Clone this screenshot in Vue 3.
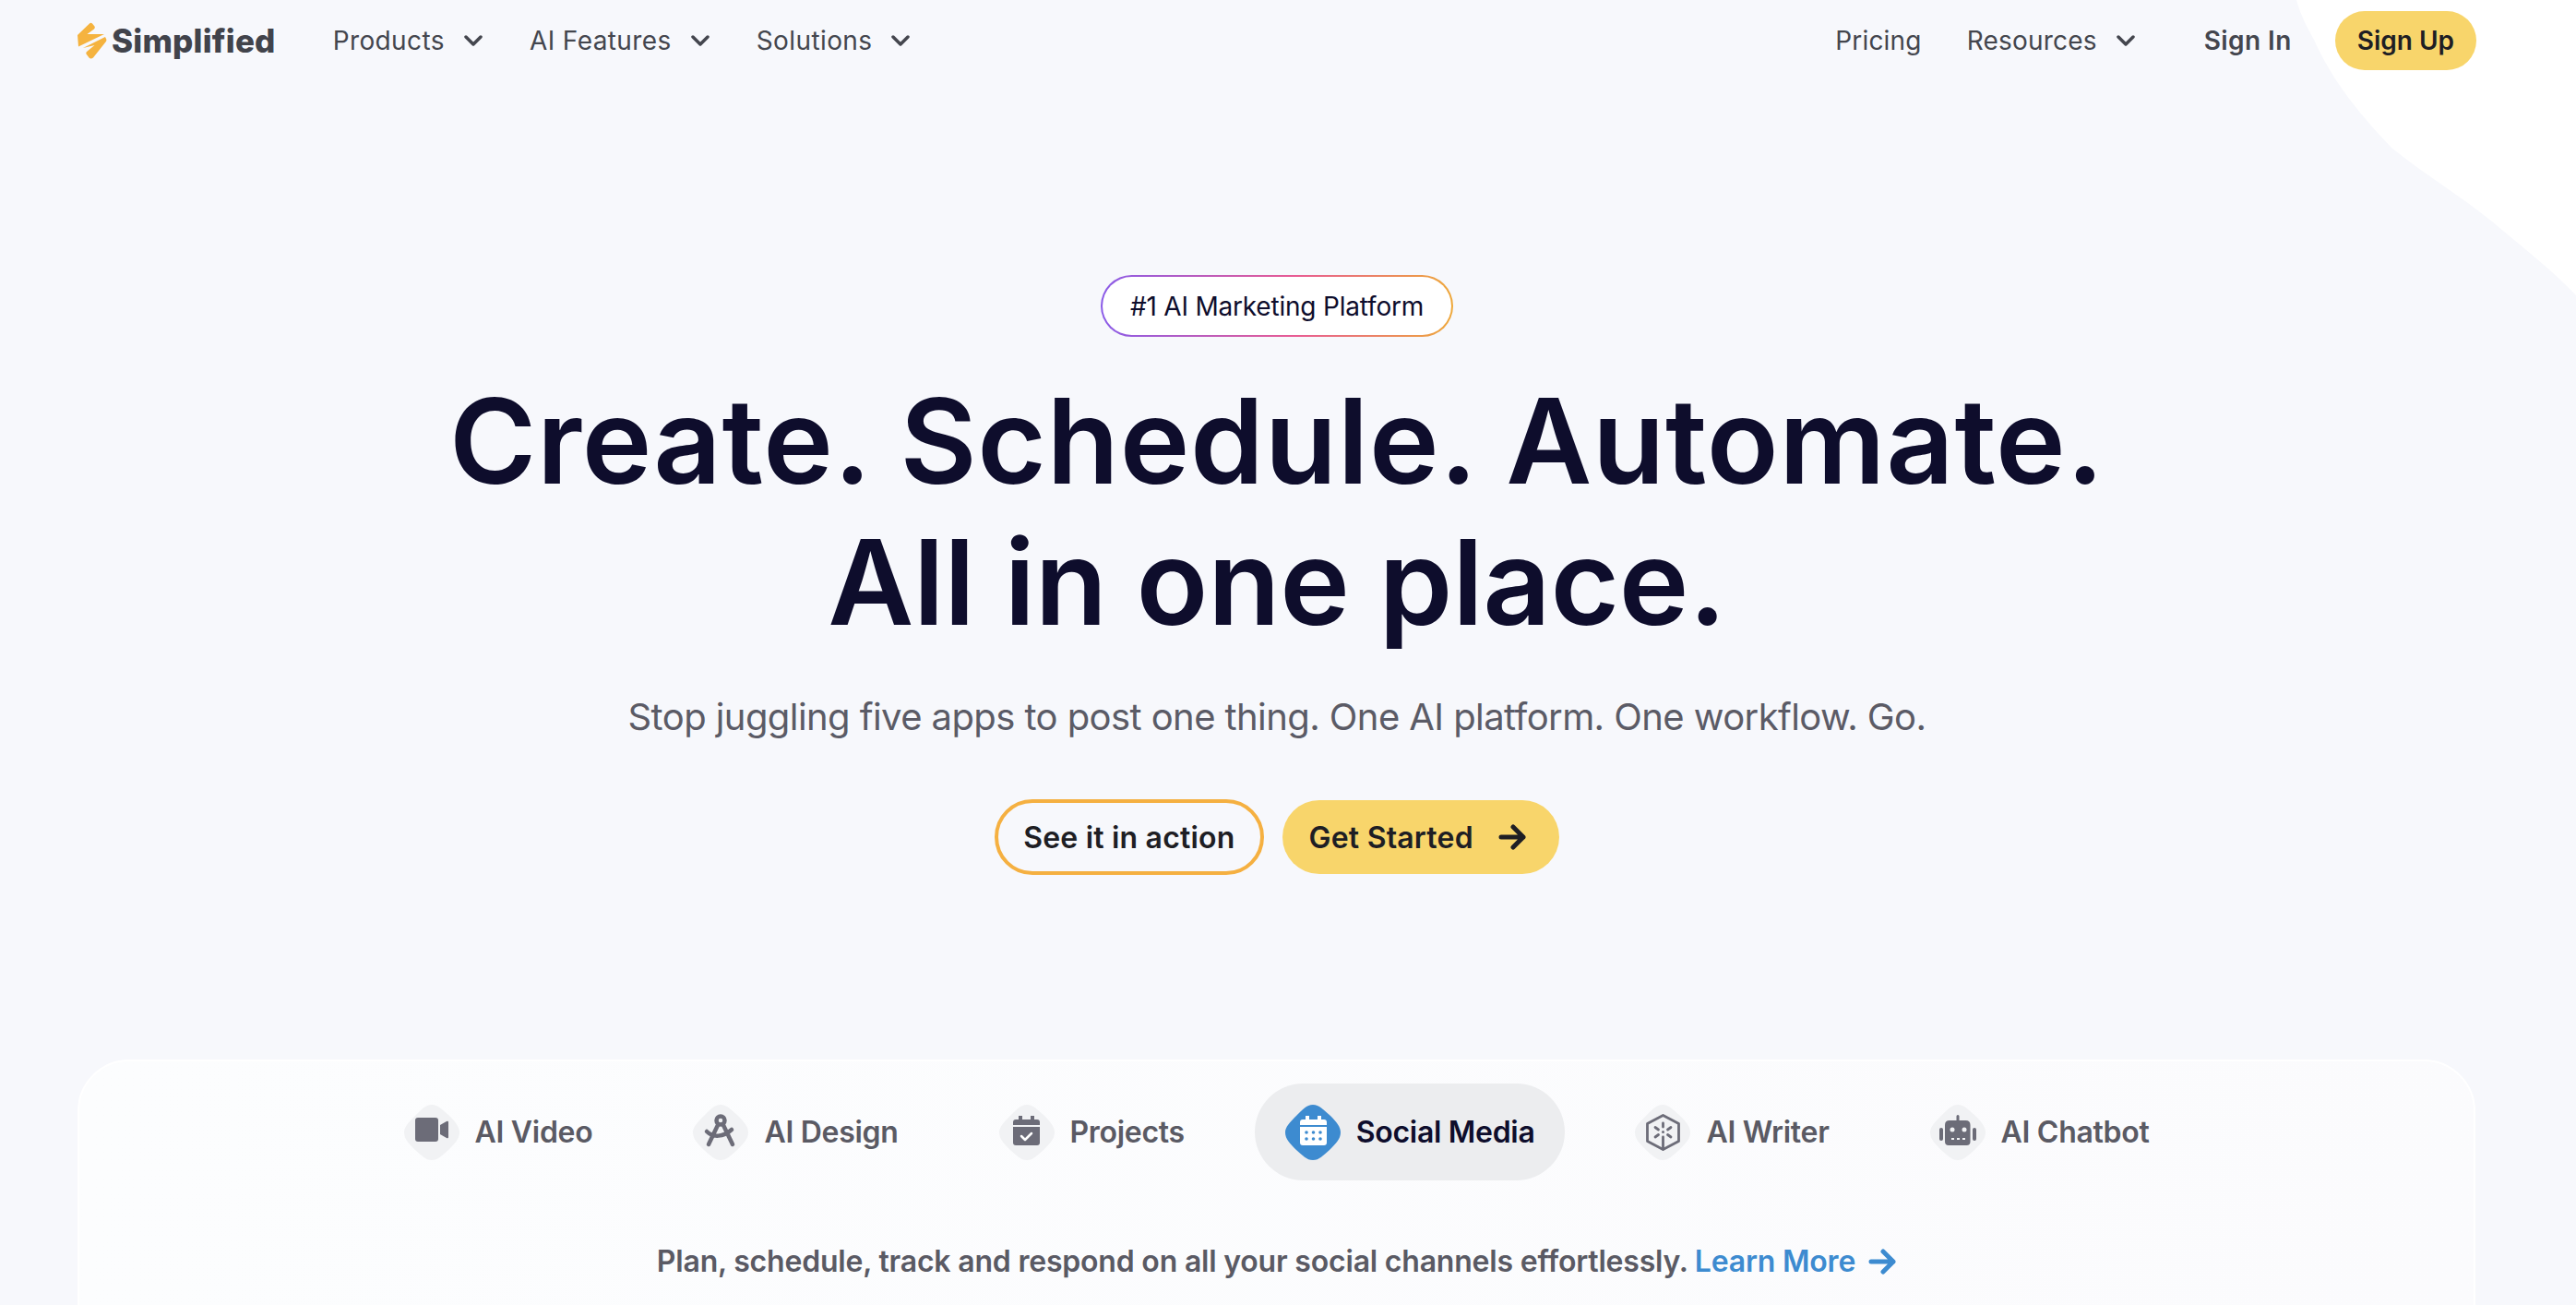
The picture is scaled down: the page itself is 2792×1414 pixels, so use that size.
<script setup>
const leftLinks = [
  { label: 'Products', drop: true },
  { label: 'AI Features', drop: true },
  { label: 'Solutions', drop: true }
]
const rightLinks = [
  { label: 'Pricing', drop: false },
  { label: 'Resources', drop: true }
]
const tabs = [
  { id: 'video', label: 'AI Video' },
  { id: 'design', label: 'AI Design' },
  { id: 'projects', label: 'Projects' },
  { id: 'social', label: 'Social Media', active: true },
  { id: 'writer', label: 'AI Writer' },
  { id: 'chatbot', label: 'AI Chatbot' }
]
const blob = 'M30 0C37 0 41 5 49 12C56 19 60 24 60 30C60 37 55 42 48 49C41 55 37 60 30 60C23 60 19 55 12 49C5 42 0 37 0 30C0 24 5 19 12 12C19 5 23 0 30 0Z'
</script>

<template>
  <div class="page">
    <svg class="corner" viewBox="0 0 303 320" width="303" height="320">
      <path d="M0 0C5 18 12 30 19 43C40 90 70 125 103 160C140 190 175 210 212 240C245 268 280 295 303 320V0Z" fill="#fff" />
    </svg>

    <header class="nav">
      <div class="nav-left">
        <a class="logo">
          <svg viewBox="0 0 32 40" width="32" height="40">
            <path d="M0 14L13 1.500Q14.500 0 16 1.500L18.500 4.500Q19.500 6 18 7.500L10.500 13H29L1 26.500Z" fill="#f5b33f" />
            <path d="M30 16L31 18Q32 20 30.500 21.500L17 38.500Q14.500 40.500 12.500 38.500L9.500 34.500Q9 33 10 32L18.500 25L6 28Z" fill="#f5b33f" />
          </svg>
          <span>Simplified</span>
        </a>
        <a v-for="link in leftLinks" :key="link.label" class="nav-link">
          {{ link.label }}
          <svg class="chev" viewBox="0 0 20 12" width="20" height="12">
            <path d="M2 2l8 8 8-8" fill="none" stroke="#44464e" stroke-width="3.500" stroke-linecap="round" stroke-linejoin="round" />
          </svg>
        </a>
      </div>
      <div class="nav-right">
        <a v-for="link in rightLinks" :key="link.label" class="nav-link">
          {{ link.label }}
          <svg v-if="link.drop" class="chev" viewBox="0 0 20 12" width="20" height="12">
            <path d="M2 2l8 8 8-8" fill="none" stroke="#44464e" stroke-width="3.500" stroke-linecap="round" stroke-linejoin="round" />
          </svg>
        </a>
        <a class="sign-in">Sign In</a>
        <a class="sign-up">Sign Up</a>
      </div>
    </header>

    <section class="hero">
      <div class="badge">#1 AI Marketing Platform</div>
      <h1>Create. Schedule. Automate.<br><span class="line-two">All in one place.</span></h1>
      <p class="sub">Stop juggling five apps to post one thing. One AI platform. One workflow. Go.</p>
      <div class="cta">
        <a class="btn outline">See it in action</a>
        <a class="btn solid">
          Get Started
          <svg viewBox="0 0 30 28" width="30" height="28">
            <path d="M3 14h24M16 3l11 11-11 11" fill="none" stroke="#1e1e24" stroke-width="5" stroke-linecap="round" stroke-linejoin="round" />
          </svg>
        </a>
      </div>
    </section>

    <section class="card">
      <div class="tabs">
        <a v-for="tab in tabs" :key="tab.id" class="tab" :class="{ active: tab.active }">
          <svg viewBox="0 0 60 60" width="60" height="60">
            <path :d="blob" :fill="tab.active ? '#3d8bd0' : '#f1f2f4'" />
            <g v-if="tab.id === 'video'" fill="#6c6c78">
              <rect x="12" y="14" width="25" height="26" rx="3" />
              <path d="M39 22l7-4q2-1 2 1v16q0 2-2 1l-7-4Z" />
            </g>
            <g v-else-if="tab.id === 'design'" fill="none" stroke="#6c6c78" stroke-width="4.500" stroke-linecap="round">
              <circle cx="30" cy="17" r="4.500" />
              <path d="M27.500 21L17 43M32.500 21L43 43M15 29C22 36 33 35 42 27" />
            </g>
            <g v-else-if="tab.id === 'projects'">
              <path d="M15 19q0-3 3-3h3v-4h4v4h9v-4h4v4h3q3 0 3 3v3H15ZM15 24h29v17q0 3-3 3H18q-3 0-3-3Z" fill="#6c6c78" />
              <path d="M24 34l4 4 7-7" fill="none" stroke="#fff" stroke-width="2.500" stroke-linecap="round" stroke-linejoin="round" />
            </g>
            <g v-else-if="tab.id === 'social'">
              <path d="M16 19q0-3 3-3h3v-4h4v4h9v-4h4v4h3q3 0 3 3v3H16ZM16 24h29v17q0 3-3 3H19q-3 0-3-3Z" fill="#fff" />
              <g fill="#3d8bd0">
                <circle cx="23" cy="30" r="1.800" /><circle cx="30.500" cy="30" r="1.800" /><circle cx="38" cy="30" r="1.800" />
                <circle cx="23" cy="37" r="1.800" /><circle cx="30.500" cy="37" r="1.800" /><circle cx="38" cy="37" r="1.800" />
              </g>
            </g>
            <g v-else-if="tab.id === 'writer'" fill="none" stroke="#6c6c78" stroke-linecap="round">
              <path d="M30.500 11.500L47.500 20.500V39.500L30.500 48.500L13.500 39.500V20.500Z" stroke-width="2.800" stroke-linejoin="round" />
              <path d="M30.500 20v4M30.500 35v13M22 24.500l3.500 2.500M39 24.500l-3.500 2.500M22 35l3.500-2.500M39 35l-3.500-2.500" stroke-width="2.800" />
              <circle cx="30.500" cy="29.500" r="1.500" fill="#6c6c78" stroke="none" />
            </g>
            <g v-else-if="tab.id === 'chatbot'">
              <path d="M28.500 12.500a1.500 1.500 0 0 1 3 0V17h7q5 0 5 5v18q0 4-4 4H20q-4 0-4-4V22q0-5 5-5h7.500Z" fill="#6c6c78" />
              <rect x="10" y="25" width="4" height="14" rx="2" fill="#6c6c78" />
              <rect x="46" y="25" width="4" height="14" rx="2" fill="#6c6c78" />
              <circle cx="24" cy="27" r="2.500" fill="#f1f2f4" />
              <circle cx="37" cy="27" r="2.500" fill="#f1f2f4" />
              <path d="M23 37h3M29 37h3M35 37h3" stroke="#f1f2f4" stroke-width="2" />
            </g>
          </svg>
          <span>{{ tab.label }}</span>
        </a>
      </div>
      <p class="desc">
        Plan, schedule, track and respond on all your social channels effortlessly.
        <a class="more">
          Learn More
          <svg viewBox="0 0 30 28" width="30" height="28">
            <path d="M3 14h24M16 3l11 11-11 11" fill="none" stroke="#3d8bd0" stroke-width="5" stroke-linecap="round" stroke-linejoin="round" />
          </svg>
        </a>
      </p>
    </section>
  </div>
</template>

<style>
html, body {
  margin: 0;
  background: #f7f8fc;
}
</style>

<style scoped>
.page {
  position: relative;
  height: 1414px;
  overflow: hidden;
  background: #f7f8fc;
  font-family: Inter, "Liberation Sans", sans-serif;
  color: #44464e;
}
.corner {
  position: absolute;
  top: 0;
  right: 0;
}
.nav {
  position: relative;
  height: 88px;
  padding: 0 108px 0 84px;
  display: flex;
  align-items: center;
  justify-content: space-between;
  font-size: 28px;
  letter-spacing: 0.4px;
}
.nav-left, .nav-right {
  display: flex;
  align-items: center;
}
.logo {
  display: flex;
  align-items: center;
  gap: 5px;
  margin-right: 62px;
  font-size: 35px;
  font-weight: 800;
  letter-spacing: 0.2px;
  color: #41434b;
}
.nav-link {
  display: flex;
  align-items: center;
  gap: 21px;
}
.nav-left .nav-link {
  margin-right: 51px;
}
.nav-right .nav-link {
  margin-right: 49px;
  letter-spacing: 0.2px;
}
.nav-right .nav-link:nth-child(2) {
  margin-right: 75px;
}
.sign-in {
  font-weight: 600;
  margin-right: 47px;
}
.sign-up {
  height: 64px;
  padding: 0 24px;
  display: flex;
  align-items: center;
  border-radius: 32px;
  background: #f8d56b;
  font-weight: 600;
  letter-spacing: 0;
  color: #1e1e24;
}
.hero {
  position: relative;
  display: flex;
  flex-direction: column;
  align-items: center;
  padding: 210px 24px 0 0;
}
.badge {
  height: 63px;
  padding: 0 30px;
  display: flex;
  align-items: center;
  border: 2px solid transparent;
  border-radius: 34px;
  background: linear-gradient(#fff, #fff) padding-box, linear-gradient(90deg, #8a5be8, #e85c94 55%, #eea83a) border-box;
  font-size: 28px;
  letter-spacing: -0.2px;
  color: #0e0d2c;
}
h1 {
  margin: 36px 0 0;
  font-size: 128px;
  line-height: 153px;
  font-weight: 600;
  letter-spacing: 0.7px;
  text-align: center;
  color: #0e0d2c;
}
.line-two {
  letter-spacing: -0.3px;
}
.sub {
  margin: 40px 0 0;
  font-size: 40px;
  line-height: 60px;
  letter-spacing: -0.58px;
  color: #5b5b66;
}
.cta {
  margin-top: 59px;
  display: flex;
  align-items: center;
  gap: 20px;
}
.btn {
  height: 80px;
  box-sizing: border-box;
  display: flex;
  align-items: center;
  border-radius: 41px;
  font-size: 32px;
  font-weight: 600;
  letter-spacing: 0.2px;
  color: #1e1e24;
}
.outline {
  height: 82px;
  padding: 0 27px;
  border: 4px solid #f5b041;
}
.solid {
  padding: 0 36px 0 29px;
  gap: 27px;
  background: #f8d56b;
}
.card {
  margin: 200px 109px 0 84px;
  box-sizing: border-box;
  height: 400px;
  padding-top: 24px;
  border: 2px solid #fff;
  border-radius: 56px;
  background: linear-gradient(100deg, #fcfdfe, #fbfbfd);
}
.tabs {
  display: flex;
  justify-content: center;
  gap: 43px;
}
.tab {
  height: 105px;
  padding: 0 33px;
  display: flex;
  align-items: center;
  gap: 17px;
  border-radius: 53px;
  font-size: 32px;
  font-weight: 600;
  letter-spacing: -0.3px;
  color: #5a5a64;
}
.tab.active {
  background: #ecedef;
  color: #0e0d2c;
}
.desc {
  margin: 64px 0 0;
  display: flex;
  justify-content: center;
  gap: 7px;
  font-size: 32px;
  line-height: 48px;
  font-weight: 600;
  letter-spacing: -0.2px;
  color: #5a5a64;
}
.more {
  display: flex;
  align-items: center;
  gap: 14px;
  color: #3d8bd0;
}
</style>
